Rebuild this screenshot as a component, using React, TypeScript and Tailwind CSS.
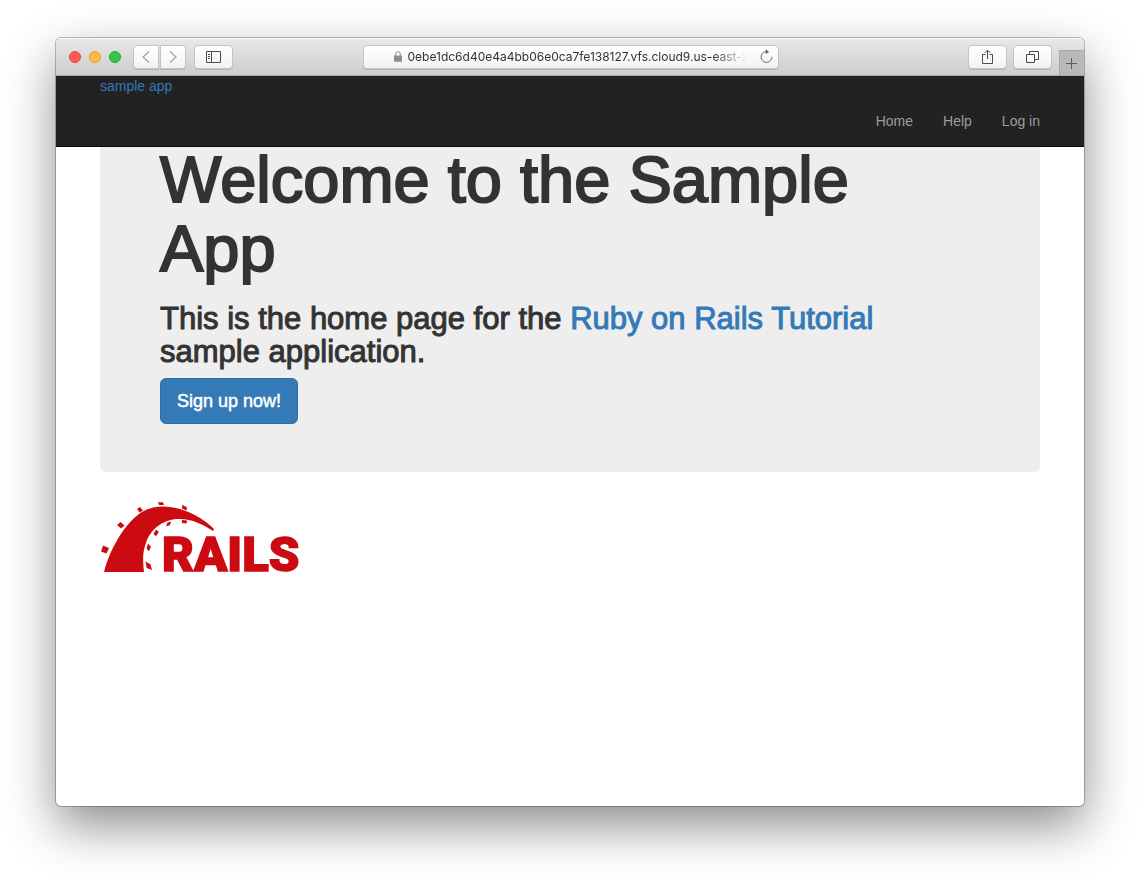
import React from "react";

const toolButton =
  "flex h-6 items-center justify-center border border-[#c4c4c4] bg-linear-to-b from-white to-[#f3f3f3] shadow-[0_1px_0_#b4b4b4]";

function TrafficLights() {
  return (
    <div className="flex gap-2">
      <button aria-label="Close" className="size-3 rounded-full border border-[#e2463f] bg-[#fc5b57]" />
      <button aria-label="Minimize" className="size-3 rounded-full border border-[#df9f2b] bg-[#fdbc40]" />
      <button aria-label="Zoom" className="size-3 rounded-full border border-[#1dad2b] bg-[#33c748]" />
    </div>
  );
}

function TitleBar() {
  return (
    <div className="flex h-[38px] items-center border-b border-[#a8a8a8] bg-linear-to-b from-[#e9e9e9] to-[#cdcdcd] pl-[13px] shadow-[inset_0_1px_0_#f8f8f8]">
      <TrafficLights />
      <div className="ml-3 flex gap-px">
        <button aria-label="Back" className={`${toolButton} w-[26px] rounded-l-sm`}>
          <svg width="10" height="14" viewBox="0 0 10 14" fill="none" stroke="#a5a5a5" strokeWidth="1.3">
            <path d="M8 1.5 2 7l6 5.5" />
          </svg>
        </button>
        <button aria-label="Forward" className={`${toolButton} w-[26px] rounded-r-sm`}>
          <svg width="10" height="14" viewBox="0 0 10 14" fill="none" stroke="#a5a5a5" strokeWidth="1.3">
            <path d="M2 1.5 8 7l-6 5.5" />
          </svg>
        </button>
      </div>
      <button aria-label="Show sidebar" className={`${toolButton} ml-2 w-[39px] rounded-sm`}>
        <svg width="15" height="12" viewBox="0 0 15 12" fill="none" stroke="#4d4d4d">
          <path d="M.5.5h14v11H.5zM5.5.5v11M2 3.5h2M2 5.5h2M2 7.5h2" />
        </svg>
      </button>
      <div className="flex flex-1 justify-center pr-[60px]">
        <div className="flex h-6 w-[416px] items-center rounded-sm border border-[#c4c4c4] bg-linear-to-b from-white to-[#f3f3f3] pr-1 pl-[30px] shadow-[0_1px_0_#b4b4b4]">
          <svg width="8" height="11" viewBox="0 0 8 11">
            <path d="M0 4.5h8V10a.7.7 0 0 1-.7.7H.7A.7.7 0 0 1 0 10z" fill="#8e8e8e" />
            <path d="M1.7 5V3a2.3 2.3 0 0 1 4.6 0v2" fill="none" stroke="#8e8e8e" />
          </svg>
          <input
            aria-label="Address"
            readOnly
            value="0ebe1dc6d40e4a4bb06e0ca7fe138127.vfs.cloud9.us-east-2.amazonaws.com"
            className="ml-1.5 min-w-0 flex-1 bg-transparent mask-r-from-90% mask-r-to-100% font-['Inter','Liberation_Sans',sans-serif] text-[12px] leading-4 text-[#333333] outline-none"
          />
          <button aria-label="Reload" className="ml-3">
            <svg width="15" height="15" viewBox="0 0 15 15" fill="none" stroke="#666666" strokeWidth="1">
              <path d="M12.9 7.8A5.4 5.4 0 1 1 7.5 2.6" />
              <path d="M6.8.2 10 2.7 6.8 5.3z" fill="#666666" stroke="none" />
            </svg>
          </button>
        </div>
      </div>
      <button aria-label="Share" className={`${toolButton} w-[39px] rounded-sm`}>
        <svg width="13" height="16" viewBox="0 0 13 16" fill="none" stroke="#4d4d4d">
          <path d="M4.5 5.5h-3v9h10v-9h-3M6.5 10V1.2M3.7 4l2.8-2.9L9.3 4" />
        </svg>
      </button>
      <button aria-label="Show all tabs" className={`${toolButton} ml-1.5 w-[39px] rounded-sm`}>
        <svg width="13" height="13" viewBox="0 0 13 13" fill="none" stroke="#4d4d4d">
          <path d="M.5 4.5h8v8h-8zM3.5 4.5v-3h9v8h-4" />
        </svg>
      </button>
      <button
        aria-label="New tab"
        className="ml-[7px] flex h-[25px] w-[25px] items-center justify-center self-end border-t border-l border-[#a8a8a8] bg-[#b9b9b9] pr-0.5"
      >
        <svg width="11" height="11" viewBox="0 0 11 11" stroke="#5c5c5c">
          <path d="M5.5 0v11M0 5.5h11" />
        </svg>
      </button>
    </div>
  );
}

function RailsLogo() {
  return (
    <svg
      role="img"
      aria-label="Rails logo"
      width="204"
      height="84"
      viewBox="0 0 204 84"
      fill="#cc0a12"
      className="block"
    >
      <path d="M4 70C10 47 24 23 39 12C51 3 66 3 80 7C94 11 106 19 114 27L113 29C103 22 90 16 77 17C62 18 50 28 46 41C42 51 43 61 44 70Z" />
      <path d="M3 43.5 9 46 6.500 51.500 1 49.500zM20.500 20 24.500 23.500 21 26.500 17 23zM40 5 43 8.500 39.500 10.500 37 7zM58 .2h5L64 3h-5zM82.300 2.800 87 5.500 86.500 8.500 82 6.500zM87 18.500l-.5 3-4.700-.6.2-2.800zM71 19.500 70 23l-4 1.500L67.500 20.500zM56 27.500 58.800 30 56 34.300 53.500 32zM48 41.500 51 44.800 49 49.300 46.500 46.500zM45.500 59.500l5 2.700L52 68l-5.300-2z" />
      <text
        x="62"
        y="69"
        fontSize="49"
        fontWeight="900"
        stroke="#cc0a12"
        strokeWidth="1.5"
        className="font-['Roboto','Liberation_Sans',sans-serif]"
      >
        RAILS
      </text>
    </svg>
  );
}

function Header() {
  return (
    <header className="relative z-10 border-b border-[#080808] bg-[#222222] px-11 text-[14px] leading-5">
      <a href="#home" className="block w-fit text-[#337ab7]">
        sample app
      </a>
      <nav className="flex justify-end gap-[30px] py-[15px] text-[#9d9d9d]">
        <a href="#home">Home</a>
        <a href="#help">Help</a>
        <a href="#login">Log in</a>
      </nav>
    </header>
  );
}

export default function App() {
  return (
    <div className="flex min-h-screen flex-col bg-white px-14 pt-[38px] pb-[74px] font-['Liberation_Sans',Arial,sans-serif]">
      <div className="flex flex-1 flex-col overflow-hidden rounded-[5px] bg-white text-[#333333] shadow-[0_0_0_1px_rgba(0,0,0,0.25),0_20px_50px_rgba(0,0,0,0.45)]">
        <TitleBar />
        <Header />
        <main className="-mt-0.5 px-11">
          <section className="rounded-b-md bg-[#eeeeee] pr-28 pb-12 pl-[60px]">
            <h1 className="text-[65px] leading-[69px] [-webkit-text-stroke:2px_#333333]">
              Welcome to the Sample App
            </h1>
            <h2 className="mt-[19px] text-[31px] leading-[33px] [-webkit-text-stroke:1px_currentColor]">
              This is the home page for the{" "}
              <a href="#tutorial" className="text-[#337ab7]">
                Ruby on Rails Tutorial
              </a>{" "}
              sample application.
            </h2>
            <a
              href="#signup"
              className="mt-2.5 inline-block rounded-md border border-[#2e6da4] bg-[#337ab7] px-4 py-2.5 align-top text-[18px] leading-6 text-white [-webkit-text-stroke:0.5px_white]"
            >
              Sign up now!
            </a>
          </section>
          <a href="#rails" className="mt-[30px] block w-fit">
            <RailsLogo />
          </a>
        </main>
      </div>
    </div>
  );
}
